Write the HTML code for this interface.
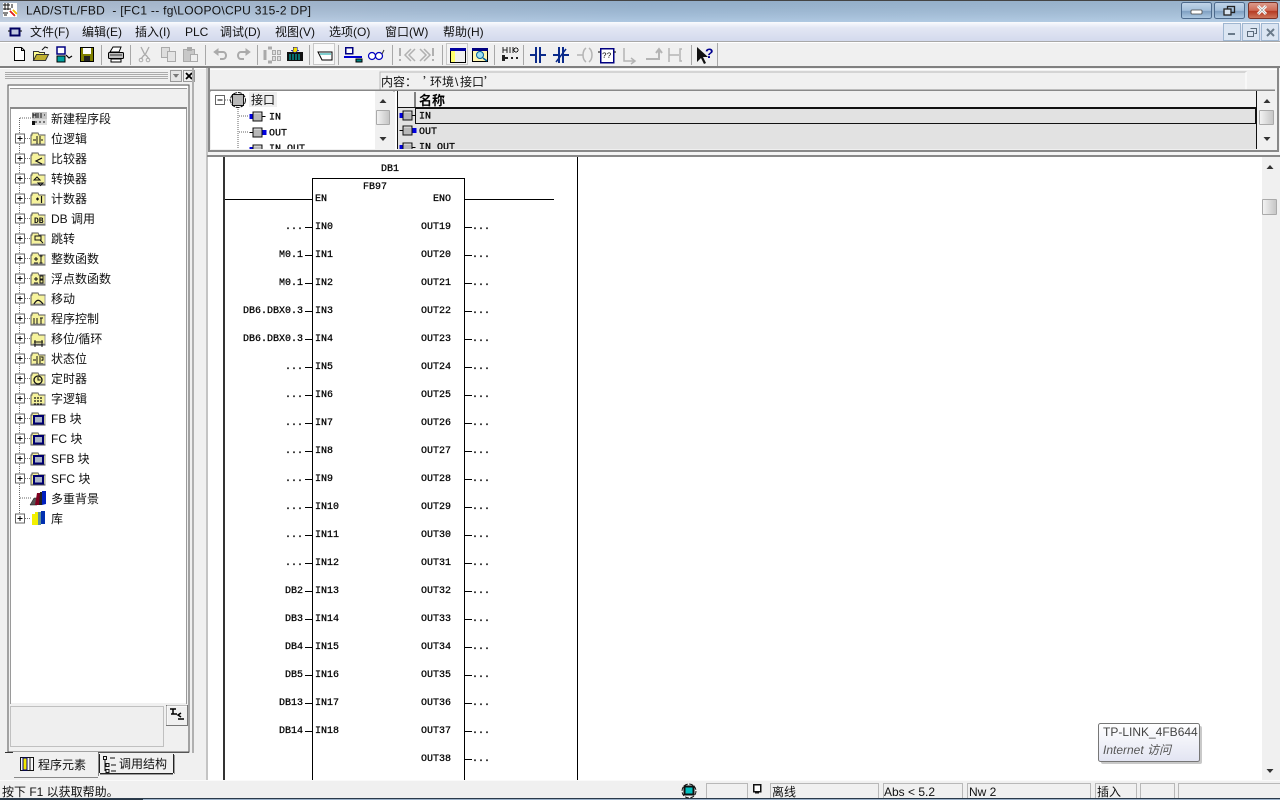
<!DOCTYPE html>
<html><head><meta charset="utf-8"><title>LAD/STL/FBD</title>
<style>
html,body{margin:0;padding:0;background:#f0f0f0;overflow:hidden;width:1280px;height:800px}
svg{position:absolute;left:0;top:0;display:block}
text{font:12px "Liberation Sans","WenQuanYi Zen Hei","Noto Sans CJK SC",sans-serif;fill:#111;white-space:pre}
.m text,text.m{font:10px "Liberation Mono","DejaVu Sans Mono",monospace;fill:#000;stroke:#000;stroke-width:.25}
.r text{text-anchor:end}
.g *{shape-rendering:crispEdges}
</style></head><body>
<svg width="1280" height="800" viewBox="0 0 1280 800">
<defs>
<linearGradient id="tb" x1="0" y1="0" x2="1" y2="0"><stop offset="0" stop-color="#b9c9de"/><stop offset=".5" stop-color="#a0bedc"/><stop offset="1" stop-color="#a9c5e0"/></linearGradient>
<linearGradient id="tv" x1="0" y1="0" x2="0" y2="1"><stop offset="0" stop-color="#000" stop-opacity=".09"/><stop offset="1" stop-color="#fff" stop-opacity=".14"/></linearGradient>
<linearGradient id="mb" x1="0" y1="0" x2="0" y2="1"><stop offset="0" stop-color="#fafbfe"/><stop offset=".3" stop-color="#e3e7f4"/><stop offset="1" stop-color="#d3daed"/></linearGradient>
<linearGradient id="th" x1="0" y1="0" x2="1" y2="0"><stop offset="0" stop-color="#f4f4f4"/><stop offset="1" stop-color="#c4c4c4"/></linearGradient>
<linearGradient id="wb" x1="0" y1="0" x2="0" y2="1"><stop offset="0" stop-color="#c3d6ea"/><stop offset=".5" stop-color="#a3bfdb"/><stop offset=".55" stop-color="#7fa0c2"/><stop offset="1" stop-color="#b0cbe4"/></linearGradient>
<linearGradient id="cb" x1="0" y1="0" x2="0" y2="1"><stop offset="0" stop-color="#dc9d8e"/><stop offset=".5" stop-color="#cf6a55"/><stop offset=".55" stop-color="#b53a22"/><stop offset="1" stop-color="#d07a5f"/></linearGradient>
<linearGradient id="tt" x1="0" y1="0" x2="0" y2="1"><stop offset="0" stop-color="#fff"/><stop offset="1" stop-color="#e2e4f2"/></linearGradient>
<g id="fo"><path d="M1.500 2.500V.5h6l1 2h6v10H.5v-10z" fill="#f6f39c" stroke="#555"/><path d="M2 11.500h12.500M14.500 3v9" stroke="#999"/></g>
<g id="ex"><rect x="15.500" y="-4.500" width="9" height="9" fill="#fff" stroke="#666"/><path d="M17.500 0h5M20 -2.500v5" stroke="#000"/><path d="M25 0h5" stroke="#777" stroke-dasharray="1 1"/></g>
<g id="fb"><use href="#fo"/><rect x="3.500" y="3.500" width="9" height="7.500" fill="#aeb8c8" stroke="#00006e" stroke-width="2"/></g>
<g id="ri"><rect x="3.500" y=".5" width="9" height="9" fill="#b8b8b8" stroke="#111"/><path d="M4.500 1.500h7" stroke="#eee"/><path d="M0 2.500h3v5H0z" fill="#0000e0"/><path d="M13 5h3" stroke="#000"/></g>
<g id="ro"><rect x="3.500" y=".5" width="9" height="9" fill="#b8b8b8" stroke="#111"/><path d="M4.500 1.500h7" stroke="#eee"/><path d="M0 5h3" stroke="#000"/><path d="M13 2.500h4v5h-4z" fill="#0000e0"/></g>
<g id="ua"><path d="M-3.500 2h7L0-2z" fill="#333"/></g>
<g id="da"><path d="M-3.500-2h7L0 2z" fill="#333"/></g>
</defs>

<!-- chrome -->
<rect width="1280" height="800" fill="#f0f0f0"/>
<g class="g">
<rect y="0" width="1280" height="1" fill="#444"/>
<rect y="1" width="1280" height="21" fill="url(#tb)"/>
<rect y="1" width="1280" height="21" fill="url(#tv)"/>
<rect y="22" width="1280" height="19" fill="url(#mb)"/>
<rect y="41" width="1280" height="1" fill="#a8a8a8"/>
<rect y="42" width="1280" height="1" fill="#fff"/>
<rect y="66" width="1280" height="2" fill="#808080"/>
<rect y="68" width="206" height="1" fill="#fff"/>
</g>

<!-- title -->
<g class="g"><rect x="3" y="3" width="14" height="14" fill="#fff"/><path d="M3 5h7M3 9h8M3 13h5M5 3v7M8 3v7M12 4v4M4 15h3" stroke="#111"/><path d="M10 11l5 5" stroke="#e02020" stroke-width="2"/><path d="M13 10l4 4" stroke="#f0c000" stroke-width="2"/></g>
<text x="26" y="14.500" textLength="285" lengthAdjust="spacing" fill="#222">LAD/STL/FBD  - [FC1 -- fg\LOOPO\CPU 315-2 DP]</text>
<g>
<rect x="1181.500" y="2.500" width="30" height="16" rx="2" fill="url(#wb)" stroke="#4d6a8c"/><rect x="1191" y="10" width="11" height="4" rx="1" fill="#fff" stroke="#444" stroke-width=".8"/>
<rect x="1214.500" y="2.500" width="30" height="16" rx="2" fill="url(#wb)" stroke="#4d6a8c"/><rect x="1227.500" y="6.500" width="7" height="6" fill="none" stroke="#222" stroke-width="1.300"/><rect x="1224" y="9" width="7" height="6" fill="#d8e4f0" stroke="#222" stroke-width="1.300"/>
<rect x="1248.500" y="2.500" width="29" height="16" rx="2" fill="url(#cb)" stroke="#7c3227"/><path d="M1258 6l8 8M1266 6l-8 8" stroke="#fff" stroke-width="3"/><path d="M1258 6l8 8M1266 6l-8 8" stroke="#333" stroke-width=".6" opacity=".5"/>
</g>

<!-- menu -->
<g class="g"><rect x="10.500" y="28.500" width="9" height="7" fill="#c0c8e0" stroke="#000060" stroke-width="2"/><path d="M8 31h2M20 31h2" stroke="#000"/></g>
<g fill="#222">
<text x="30" y="36">文件(F)</text><text x="82" y="36">编辑(E)</text><text x="135" y="36">插入(I)</text><text x="185" y="36">PLC</text><text x="220" y="36">调试(D)</text><text x="275" y="36">视图(V)</text><text x="329" y="36">选项(O)</text><text x="385" y="36">窗口(W)</text><text x="443" y="36">帮助(H)</text>
</g>
<g>
<rect x="1223.500" y="23.500" width="17" height="17" fill="#dbe5f2" stroke="#9fb6d0"/><rect x="1228" y="33" width="7" height="2" fill="#6a7a8a"/>
<rect x="1242.500" y="23.500" width="17" height="17" fill="#dbe5f2" stroke="#9fb6d0"/><path d="M1250.500 28.500h6v5h-2M1247.500 31.500h6v5h-6z" fill="none" stroke="#5a6a7a"/>
<rect x="1261.500" y="23.500" width="17" height="17" fill="#dbe5f2" stroke="#9fb6d0"/><path d="M1267 29l7 7M1274 29l-7 7" stroke="#6a7a8a" stroke-width="2"/>
</g>

<!-- toolbar -->
<g class="g" stroke="#a8a8a8">
<path d="M101.500 45v20M130.500 45v20M205.500 45v20M257.500 45v20M309.500 45v20M338.500 45v20M392.500 45v20M442.500 45v20M494.500 45v20M523.500 45v20M691.500 45v20M717.500 43v23"/>
</g>
<g>
<path d="M14.500 47.500h7l3 3v10h-10z" fill="#fff" stroke="#000"/><path d="M21.500 47.500v3h3" fill="none" stroke="#000"/>
<path d="M33.500 60.500v-9h5l1 1h5v8z" fill="#ffff90" stroke="#333"/><path d="M33.500 60.500l3-6h12l-3 6z" fill="#c0b030" stroke="#333"/><path d="M42 50l3-3 3 1" fill="none" stroke="#111"/>
<rect x="57" y="47" width="8" height="7" fill="#fff" stroke="#000080" stroke-width="1.500"/><rect x="57" y="56" width="8" height="6" fill="#00a0a0" stroke="#000"/><path d="M66 55l3 3 3-2" fill="none" stroke="#000" stroke-width="1.200"/>
<rect x="80.500" y="47.500" width="13" height="14" fill="#808000" stroke="#000"/><rect x="83" y="48" width="8" height="6" fill="#fff"/><rect x="84" y="56" width="6" height="5" fill="#222"/>
<path d="M110 52l3-5h8l-2 5z" fill="#fff" stroke="#000"/><rect x="108.500" y="52.500" width="15" height="6" rx="1" fill="#c0c0c0" stroke="#000"/><path d="M111 59h10v3h-10z" fill="#fff" stroke="#000"/><path d="M110 55h12" stroke="#333"/>
</g>
<g stroke="#aaa" fill="#ddd">
<path d="M141 47l4 8 4-8M144 55l-3 4M146 55l3 4" fill="none" stroke-width="1.300"/><circle cx="141" cy="60" r="1.800" fill="none"/><circle cx="148" cy="60" r="1.800" fill="none"/>
<rect x="161.500" y="47.500" width="8" height="10"/><rect x="167.500" y="51.500" width="8" height="10" fill="#e4e4e4"/>
<rect x="183.500" y="49.500" width="11" height="12" fill="#c8c8c8"/><rect x="187.500" y="47.500" width="4" height="3" fill="#aaa"/><rect x="190.500" y="54.500" width="7" height="7" fill="#eee"/>
<path d="M215 52h8c4 0 4 7 0 7h-3" fill="none" stroke-width="2"/><path d="M214 52l4-3v6z" fill="#aaa"/>
<path d="M249 52h-8c-4 0-4 7 0 7h3" fill="none" stroke-width="2"/><path d="M250 52l-4-3v6z" fill="#aaa"/>
<path d="M268 48h4M268 62h4M265 50v10" fill="none" stroke-width="3"/><rect x="272.500" y="50.500" width="3" height="4"/><rect x="277.500" y="50.500" width="3" height="4"/><rect x="272.500" y="56.500" width="3" height="4"/><rect x="277.500" y="56.500" width="3" height="4"/>
</g>
<g class="g">
<rect x="287" y="52" width="16" height="9" fill="#111"/><path d="M290 54v6M293 54v6M296 54v6M299 54v6" stroke="#00c8c8"/><path d="M293 47h4v3h2l-4 3-4-3h2z" fill="#f4e000" stroke="#0000a0" stroke-width=".5"/>
<rect x="313.500" y="43.500" width="21" height="21" fill="#f8f8f8" stroke="#c8c8c8"/>
</g>
<path d="M318 52h14v8h-10z" fill="#fff" stroke="#000" /><path d="M320 54h11" stroke="#00a0a0"/>
<g class="g">
<rect x="345.500" y="47.500" width="7" height="6" fill="#fff" stroke="#000080" stroke-width="1.500"/><rect x="344" y="56" width="18" height="2" fill="#0000d0"/><rect x="356" y="59" width="6" height="3" fill="#008080" stroke="#000" stroke-width=".6"/>
</g>
<circle cx="372" cy="56" r="3.500" fill="#fff" stroke="#0000c0" stroke-width="1.200"/><circle cx="379" cy="56" r="3.500" fill="#fff" stroke="#0000c0" stroke-width="1.200"/><path d="M382 54l2-4" stroke="#333"/>
<g stroke="#b0b0b0" fill="none" stroke-width="1.500">
<path d="M400 48v8M400 59v2" stroke-width="2"/><path d="M411 49l-6 6 6 6M415 49l-6 6 6 6" /><path d="M424 49l6 6-6 6M428 49l6 6-6 6" transform="translate(-4 0)"/><path d="M433 48v8M433 59v2" stroke-width="2"/>
</g>
<g class="g">
<rect x="446.500" y="43.500" width="21" height="21" fill="#f4f4f4" stroke="#c8c8c8"/>
<rect x="450.500" y="48.500" width="15" height="14" fill="#f0f0f0" stroke="#000"/><rect x="450" y="48" width="16" height="3" fill="#0000a0"/><rect x="451" y="51" width="4" height="11" fill="#ffff70"/>
<rect x="472.500" y="48.500" width="15" height="13" fill="#fff6b0" stroke="#000"/><rect x="472" y="48" width="16" height="3" fill="#000080"/>
</g>
<circle cx="480" cy="55" r="3.500" fill="#a0e0f0" stroke="#0060a0"/><path d="M483 58l4 3" stroke="#0060a0" stroke-width="1.500"/>
<g class="g" fill="#222">
<path d="M503 47v6M507 47v6M503 50h4M510 47v6M513 47v6" stroke="#222" fill="none"/><circle cx="516" cy="50" r="2" fill="none" stroke="#222"/>
<rect x="502" y="55" width="3" height="6"/><rect x="505" y="57" width="3" height="2"/><rect x="511" y="57" width="2" height="2"/><rect x="516" y="57" width="2" height="2"/>
</g>
<g fill="none" stroke="#0a2a8a" stroke-width="2">
<path d="M530 55h5M541 55h5M536 47v16M540 47v16"/>
<path d="M553 55h5M564 55h5M559 47v16M563 47v16"/><path d="M556 62l10-13" stroke-width="1.500"/>
</g>
<g fill="none" stroke="#b4b4b4" stroke-width="1.500">
<path d="M577 55h6M586 48c-4 3-4 11 0 14M589 48c4 3 4 11 0 14"/>
<path d="M624 48v13h10M631 58l4 3-4 3" />
<path d="M646 59h13v-9M656 53l3-4 3 4" stroke-width="2"/>
<path d="M669 48v14M669 55h10M682 49h-2v12h2"/>
</g>
<g class="g"><rect x="600.500" y="48.500" width="13" height="14" fill="#fff" stroke="#000080" stroke-width="1.500"/><path d="M598 52h2M614 52h2" stroke="#000"/></g>
<text x="602" y="58" style="font:8px 'Liberation Mono',monospace;fill:#000">??</text>
<path d="M697 47v15l4-4 3 6 2-1-3-6h5z" fill="#111"/>
<text x="705" y="58" style="font:bold 14px 'Liberation Sans',sans-serif;fill:#000090">?</text>

<!-- left panel -->
<g class="g">
<path d="M5 72.500h163M5 74.500h163M5 76.500h163M5 78.500h163" stroke="#aaa"/>
<rect x="170.500" y="70.500" width="11" height="11" fill="#e4e4e4" stroke="#999"/><path d="M173 74h6l-3 4z" fill="#777"/>
<rect x="183.500" y="70.500" width="11" height="11" fill="#f0f0f0" stroke="#999"/>
</g>
<path d="M186 73l6 6M192 73l-6 6" stroke="#000" stroke-width="1.800"/>
<g class="g">
<rect x="8" y="85" width="181" height="667" fill="#f0f0f0" stroke="#555" />
<rect x="9" y="86" width="179" height="2" fill="#fff"/>
<rect x="10" y="88" width="177" height="1" fill="#999"/>
<rect x="10" y="107" width="177" height="2" fill="#8a8a8a"/>
<rect x="11" y="109" width="175" height="594" fill="#fff"/>
<path d="M10.500 109v595M186.500 109v595" stroke="#9a9a9a"/>
<rect x="10.500" y="706.500" width="153" height="40" fill="#efefef" stroke="#c0c0c0"/>
<rect x="166.500" y="705.500" width="21" height="20" fill="#f0f0f0" stroke="#777"/><path d="M167 706h20M167 706v19" stroke="#fff"/>
<path d="M192.500 68v685M193.500 68v685" stroke="#b0b0b0"/>
<path d="M207 68v712" stroke="#999"/>
<path d="M5 752.500h8" stroke="#333"/>
<path d="M19.500 118v400" stroke="#666" stroke-dasharray="1 1"/><path d="M20 118h12" stroke="#666" stroke-dasharray="1 1"/><path d="M20 498h12" stroke="#666" stroke-dasharray="1 1"/>
</g>
<path d="M170 709h6M173 709v5M171 714h6M181 713l-3 2 3 2M178 719h6" fill="none" stroke="#000" stroke-width="1.500"/>

<!-- tree -->
<g class="g">
<rect x="32" y="112" width="15" height="7" fill="#c4c4c4"/><rect x="32" y="119" width="15" height="6" fill="#ddd"/>
<path d="M33 113v5M36 113v5M33 115h3M38 113v5M41 113v5M44 115h1" stroke="#111"/><rect x="32" y="121" width="3" height="4" fill="#111"/><path d="M35 122h11" stroke="#111" stroke-width="1.400" stroke-dasharray="2 2"/>
</g>
<g class="g">
<use href="#ex" y="138.500" x="0"/><use href="#ex" y="158.500"/><use href="#ex" y="178.500"/><use href="#ex" y="198.500"/><use href="#ex" y="218.500"/><use href="#ex" y="238.500"/><use href="#ex" y="258.500"/><use href="#ex" y="278.500"/><use href="#ex" y="298.500"/><use href="#ex" y="318.500"/><use href="#ex" y="338.500"/><use href="#ex" y="358.500"/><use href="#ex" y="378.500"/><use href="#ex" y="398.500"/><use href="#ex" y="418.500"/><use href="#ex" y="438.500"/><use href="#ex" y="458.500"/><use href="#ex" y="478.500"/><use href="#ex" y="518.500"/>
</g>
<g class="g">
<use href="#fo" x="30.500" y="132.500"/><use href="#fo" x="30.500" y="152.500"/><use href="#fo" x="30.500" y="172.500"/><use href="#fo" x="30.500" y="192.500"/><use href="#fo" x="30.500" y="212.500"/><use href="#fo" x="30.500" y="232.500"/><use href="#fo" x="30.500" y="252.500"/><use href="#fo" x="30.500" y="272.500"/><use href="#fo" x="30.500" y="292.500"/><use href="#fo" x="30.500" y="312.500"/><use href="#fo" x="30.500" y="332.500"/><use href="#fo" x="30.500" y="352.500"/><use href="#fo" x="30.500" y="372.500"/><use href="#fo" x="30.500" y="392.500"/>
<use href="#fb" x="30.500" y="412.500"/><use href="#fb" x="30.500" y="432.500"/><use href="#fb" x="30.500" y="452.500"/><use href="#fb" x="30.500" y="472.500"/>
</g>
<g stroke="#111" fill="none">
<path d="M33 140h3M37 136v8M40 136v8M41 140h2"/>
<path d="M42 158l-6 3 6 3" stroke-width="1.200"/>
<path d="M34 180l3-3 3 3zM38 183h5l-2.500 2.500z"/>
<path d="M36 199h3M37.500 197.500v3M41.500 196v7" stroke-width="1.200"/>
<path d="M35 236h6v4h-6zM40 240l3 3"/>
<path d="M34 259h4M36 257v4M34 263h4M41 256v7M39.500 256h3M39.500 263h3"/>
<path d="M34 279h4M36 277v4M34 283h4M40 276h3v3h-3zM40 280h3v3h-3z"/>
<path d="M34 304c3-5 5-5 9 0" stroke-width="1.200"/>
<path d="M34 318v6M37 318v6M40 318h3M41 318v6"/>
<path d="M34 342h9M34 345h9M35 340v7M42 340v7"/>
<path d="M33 360h3M37 356v8M40 356v8M41 357h2v3h-1v1M42 363v1"/>
<circle cx="38" cy="380" r="4" stroke-width="1.300"/><path d="M38 377v3h2.500"/>
<path d="M34 398h9M34 401h9M34 404h9" stroke-width="1.200" stroke-dasharray="2 1"/>
</g>
<text x="34" y="223" style="font:bold 8px 'Liberation Mono',monospace;fill:#111">DB</text>
<g>
<path d="M30 505l4-7h3v7z" fill="#555" stroke="#111" stroke-width=".5"/><path d="M35 505l2-12h3v12z" fill="#800020"/><path d="M39 505l1-13h2v13z" fill="#222"/><path d="M42 505v-14h4v13z" fill="#0020c0"/>
<rect x="32" y="514" width="3" height="11" fill="#f4f000"/><rect x="35" y="512" width="3" height="13" fill="#f0f000" /><rect x="38" y="512" width="3" height="13" fill="#60909a"/><rect x="41" y="511" width="4" height="13" fill="#0030b0"/>
</g>
<g>
<text x="51" y="123">新建程序段</text><text x="51" y="143">位逻辑</text><text x="51" y="163">比较器</text><text x="51" y="183">转换器</text><text x="51" y="203">计数器</text><text x="51" y="223">DB 调用</text><text x="51" y="243">跳转</text><text x="51" y="263">整数函数</text><text x="51" y="283">浮点数函数</text><text x="51" y="303">移动</text><text x="51" y="323">程序控制</text><text x="51" y="343">移位/循环</text><text x="51" y="363">状态位</text><text x="51" y="383">定时器</text><text x="51" y="403">字逻辑</text><text x="51" y="423">FB 块</text><text x="51" y="443">FC 块</text><text x="51" y="463">SFB 块</text><text x="51" y="483">SFC 块</text><text x="51" y="503">多重背景</text><text x="51" y="523">库</text>
</g>

<!-- tabs -->
<g class="g">
<path d="M98 752.500h91" stroke="#555"/>
<rect x="13" y="752" width="85" height="26" fill="#f0f0f0"/>
<path d="M98.500 753v23M14 777.500h84" stroke="#888"/>
<path d="M99.500 754v19M100 773.500h73M173.500 754v19" stroke="#222"/><path d="M100 774.500h73M174.500 755v19" stroke="#999"/>
<rect x="20.500" y="757.500" width="13" height="13" fill="#f8f8f8" stroke="#111"/><rect x="23" y="758" width="4" height="12" fill="#f4e800" stroke="#000080"/><path d="M30 758v12" stroke="#111"/>
<path d="M103.500 756.500h3v3h-3zM106 763.500h3v3h-3zM106 769.500h3v3h-3zM105 760v11M110 758h5M111 765h5M111 771h5" fill="none" stroke="#111"/>
</g>
<text x="38" y="769">程序元素</text><text x="119" y="768">调用结构</text>

<!-- interface panel -->
<g class="g">
<rect x="208" y="68" width="2" height="85" fill="#888"/>
<rect x="1277" y="68" width="2" height="83" fill="#888"/>
<rect x="210" y="69" width="1067" height="1" fill="#fff"/>
<rect x="380" y="72" width="866" height="18" fill="#f0f0f0" stroke="#b8b8b8" stroke-width="1"/>
<rect x="381" y="73" width="864" height="17" fill="#f0f0f0"/>
<path d="M1246 72v18" stroke="#fff"/>
<path d="M210 90.500h1065" stroke="#888" stroke-width="2"/>
<rect x="211" y="91" width="181" height="58" fill="#fff"/>
<rect x="375" y="91" width="18" height="58" fill="#f0f0f0"/>
<rect x="376.500" y="110.500" width="13" height="14" rx="1" fill="url(#th)" stroke="#aaa"/>
<path d="M396 91v60" stroke="#fff" stroke-width="2"/>
<rect x="397" y="91" width="859" height="16" fill="#f0f0f0"/>
<path d="M397.500 91v58M415 92v15M397 107.500h860" stroke="#111"/>
<rect x="398" y="108" width="858" height="41" fill="#e2e2e2"/>
<path d="M397.500 107v42" stroke="#111"/>
<rect x="415.500" y="108.500" width="840" height="15" fill="#e2e2e2" stroke="#111"/>
<path d="M1256.500 91v58" stroke="#111"/>
<rect x="1257" y="91" width="20" height="58" fill="#f0f0f0"/>
<rect x="1259.500" y="110.500" width="14" height="14" rx="1" fill="url(#th)" stroke="#aaa"/>
<rect x="208" y="150" width="1071" height="2" fill="#888"/>
<rect x="208" y="152" width="1072" height="4" fill="#f4f4f4"/>
</g>
<use href="#ua" x="383" y="101"/><use href="#da" x="383" y="139"/>
<use href="#ua" x="1267" y="101"/><use href="#da" x="1267" y="139"/>
<text x="381" y="86">内容：</text><text x="423" y="86" style="font-family:'Noto Sans CJK SC',sans-serif">’</text><text x="430" y="86">环境</text><text x="455" y="86">\</text><text x="460" y="86">接口</text><text x="484" y="86" style="font-family:'Noto Sans CJK SC',sans-serif">’</text>
<text x="419" y="105" style="font:bold 13px 'Liberation Sans','Noto Sans CJK SC',sans-serif;fill:#000">名称</text>
<g class="g">
<rect x="249" y="92" width="28" height="15" fill="#eee"/>
<rect x="215.500" y="95.500" width="9" height="9" fill="#fff" stroke="#666"/><path d="M217.500 100h5" stroke="#000"/><path d="M225 100h5M238 107v42M239 116h10M239 132h10" stroke="#666" stroke-dasharray="1 1"/>
<rect x="232.500" y="94.500" width="11" height="11" fill="#b8b8b8" stroke="#111"/>
</g>
<circle cx="238" cy="100" r="7.500" fill="none" stroke="#111" stroke-dasharray="4 1"/>
<text x="251" y="104">接口</text>
<g class="g"><use href="#ri" x="249.500" y="111.500"/><use href="#ro" x="249.500" y="127.500"/></g>
<g class="g"><svg x="249" y="143" width="20" height="6" overflow="hidden"><use href="#ri" x=".5" y="1.500"/></svg>
<use href="#ri" x="399.500" y="110.500"/><use href="#ro" x="399.500" y="125.500"/>
<svg x="399" y="141" width="18" height="8" overflow="hidden"><use href="#ri" x=".5" y="1.500"/></svg></g>
<g class="m">
<text x="269" y="119.500">IN</text><text x="269" y="135.500">OUT</text>
<text x="419" y="118.500">IN</text><text x="419" y="134">OUT</text>
</g>
<svg x="0" y="140" width="1280" height="9" overflow="hidden"><g class="m"><text x="269" y="11">IN_OUT</text><text x="419" y="9.500">IN_OUT</text></g></svg>

<!-- editor -->
<g class="g">
<rect x="208" y="156" width="1054" height="624" fill="#fff"/>
<rect x="207" y="155" width="1073" height="2" fill="#888"/>
<rect x="1262" y="157" width="18" height="623" fill="#f0f0f0"/>
<rect x="1262.500" y="199.500" width="14" height="15" rx="1" fill="url(#th)" stroke="#aaa"/>
<rect x="223" y="157" width="2" height="623" fill="#333"/>
<path d="M577.500 157v623" stroke="#000"/>
<path d="M225 199.500h87M465 199.500h89" stroke="#000"/>
<path d="M312.500 178v602M464.500 178v602M312 178.500h153" stroke="#000"/>
</g>
<use href="#ua" x="1270" y="167"/><use href="#da" x="1270" y="771"/>
<g class="g" stroke="#000">
<path d="M305 227.500h7M305 255.500h7M305 283.500h7M305 311.500h7M305 339.500h7M305 367.500h7M305 395.500h7M305 423.500h7M305 451.500h7M305 479.500h7M305 507.500h7M305 535.500h7M305 563.500h7M305 591.500h7M305 619.500h7M305 647.500h7M305 675.500h7M305 703.500h7M305 731.500h7"/>
<path d="M465 227.500h7M465 255.500h7M465 283.500h7M465 311.500h7M465 339.500h7M465 367.500h7M465 395.500h7M465 423.500h7M465 451.500h7M465 479.500h7M465 507.500h7M465 535.500h7M465 563.500h7M465 591.500h7M465 619.500h7M465 647.500h7M465 675.500h7M465 703.500h7M465 731.500h7M465 759.500h7"/>
</g>
<g class="m">
<text x="381" y="171">DB1</text><text x="363" y="189">FB97</text><text x="315" y="201">EN</text><text x="433" y="201">ENO</text>
<text x="315" y="229">IN0</text><text x="315" y="257">IN1</text><text x="315" y="285">IN2</text><text x="315" y="313">IN3</text><text x="315" y="341">IN4</text><text x="315" y="369">IN5</text><text x="315" y="397">IN6</text><text x="315" y="425">IN7</text><text x="315" y="453">IN8</text><text x="315" y="481">IN9</text><text x="315" y="509">IN10</text><text x="315" y="537">IN11</text><text x="315" y="565">IN12</text><text x="315" y="593">IN13</text><text x="315" y="621">IN14</text><text x="315" y="649">IN15</text><text x="315" y="677">IN16</text><text x="315" y="705">IN17</text><text x="315" y="733">IN18</text>
<text x="421" y="229">OUT19</text><text x="421" y="257">OUT20</text><text x="421" y="285">OUT21</text><text x="421" y="313">OUT22</text><text x="421" y="341">OUT23</text><text x="421" y="369">OUT24</text><text x="421" y="397">OUT25</text><text x="421" y="425">OUT26</text><text x="421" y="453">OUT27</text><text x="421" y="481">OUT28</text><text x="421" y="509">OUT29</text><text x="421" y="537">OUT30</text><text x="421" y="565">OUT31</text><text x="421" y="593">OUT32</text><text x="421" y="621">OUT33</text><text x="421" y="649">OUT34</text><text x="421" y="677">OUT35</text><text x="421" y="705">OUT36</text><text x="421" y="733">OUT37</text><text x="421" y="761">OUT38</text>
<text x="472" y="229">...</text><text x="472" y="257">...</text><text x="472" y="285">...</text><text x="472" y="313">...</text><text x="472" y="341">...</text><text x="472" y="369">...</text><text x="472" y="397">...</text><text x="472" y="425">...</text><text x="472" y="453">...</text><text x="472" y="481">...</text><text x="472" y="509">...</text><text x="472" y="537">...</text><text x="472" y="565">...</text><text x="472" y="593">...</text><text x="472" y="621">...</text><text x="472" y="649">...</text><text x="472" y="677">...</text><text x="472" y="705">...</text><text x="472" y="733">...</text><text x="472" y="761">...</text>
</g>
<g class="m r">
<text x="303" y="229">...</text><text x="303" y="257">M0.1</text><text x="303" y="285">M0.1</text><text x="303" y="313">DB6.DBX0.3</text><text x="303" y="341">DB6.DBX0.3</text><text x="303" y="369">...</text><text x="303" y="397">...</text><text x="303" y="425">...</text><text x="303" y="453">...</text><text x="303" y="481">...</text><text x="303" y="509">...</text><text x="303" y="537">...</text><text x="303" y="565">...</text><text x="303" y="593">DB2</text><text x="303" y="621">DB3</text><text x="303" y="649">DB4</text><text x="303" y="677">DB5</text><text x="303" y="705">DB13</text><text x="303" y="733">DB14</text>
</g>

<!-- tooltip -->
<rect x="1101" y="726" width="101" height="38" rx="2" fill="#888" opacity=".45"/>
<rect x="1098.500" y="723.500" width="101" height="38" rx="2" fill="url(#tt)" stroke="#777"/>
<text x="1103" y="736" fill="#444" style="fill:#444;font-size:12px">TP-LINK_4FB644</text>
<text x="1103" y="754" style="fill:#555;font-style:italic;font-size:12px">Internet 访问</text>

<!-- status bar -->
<g class="g">
<rect y="780" width="1280" height="18" fill="#f0f0f0"/>
<path d="M0 780.500h1280" stroke="#fafafa"/>
<g fill="none" stroke="#b8b8b8">
<path d="M706.500 798v-14.500h41v14.500M770.500 798v-14.500h108v14.500M883.500 798v-14.500h79v14.500M967.500 798v-14.500h123v14.500M1095.500 798v-14.500h41v14.500M1140.500 798v-14.500h34v14.500M1178.500 798v-14.500h102"/>
</g>
<rect y="798" width="1280" height="2" fill="#2a3a4a"/>
<rect x="143" y="799" width="1137" height="1" fill="#9ab0c8"/>
<rect x="684.500" y="786.500" width="9" height="8" fill="#00c0c0" stroke="#111" stroke-width="2"/>
<rect x="753.500" y="784.500" width="7" height="7" fill="#fff" stroke="#111" stroke-width="1.500"/><path d="M755 793h4" stroke="#111"/>
</g>
<circle cx="689" cy="791" r="7" fill="none" stroke="#111" stroke-dasharray="4 1.500"/>
<text x="2" y="796">按下 F1 以获取帮助。</text>
<text x="772" y="796">离线</text><text x="884" y="796">Abs &lt; 5.2</text><text x="969" y="796">Nw 2</text><text x="1097" y="796">插入</text>
</svg>
</body></html>
